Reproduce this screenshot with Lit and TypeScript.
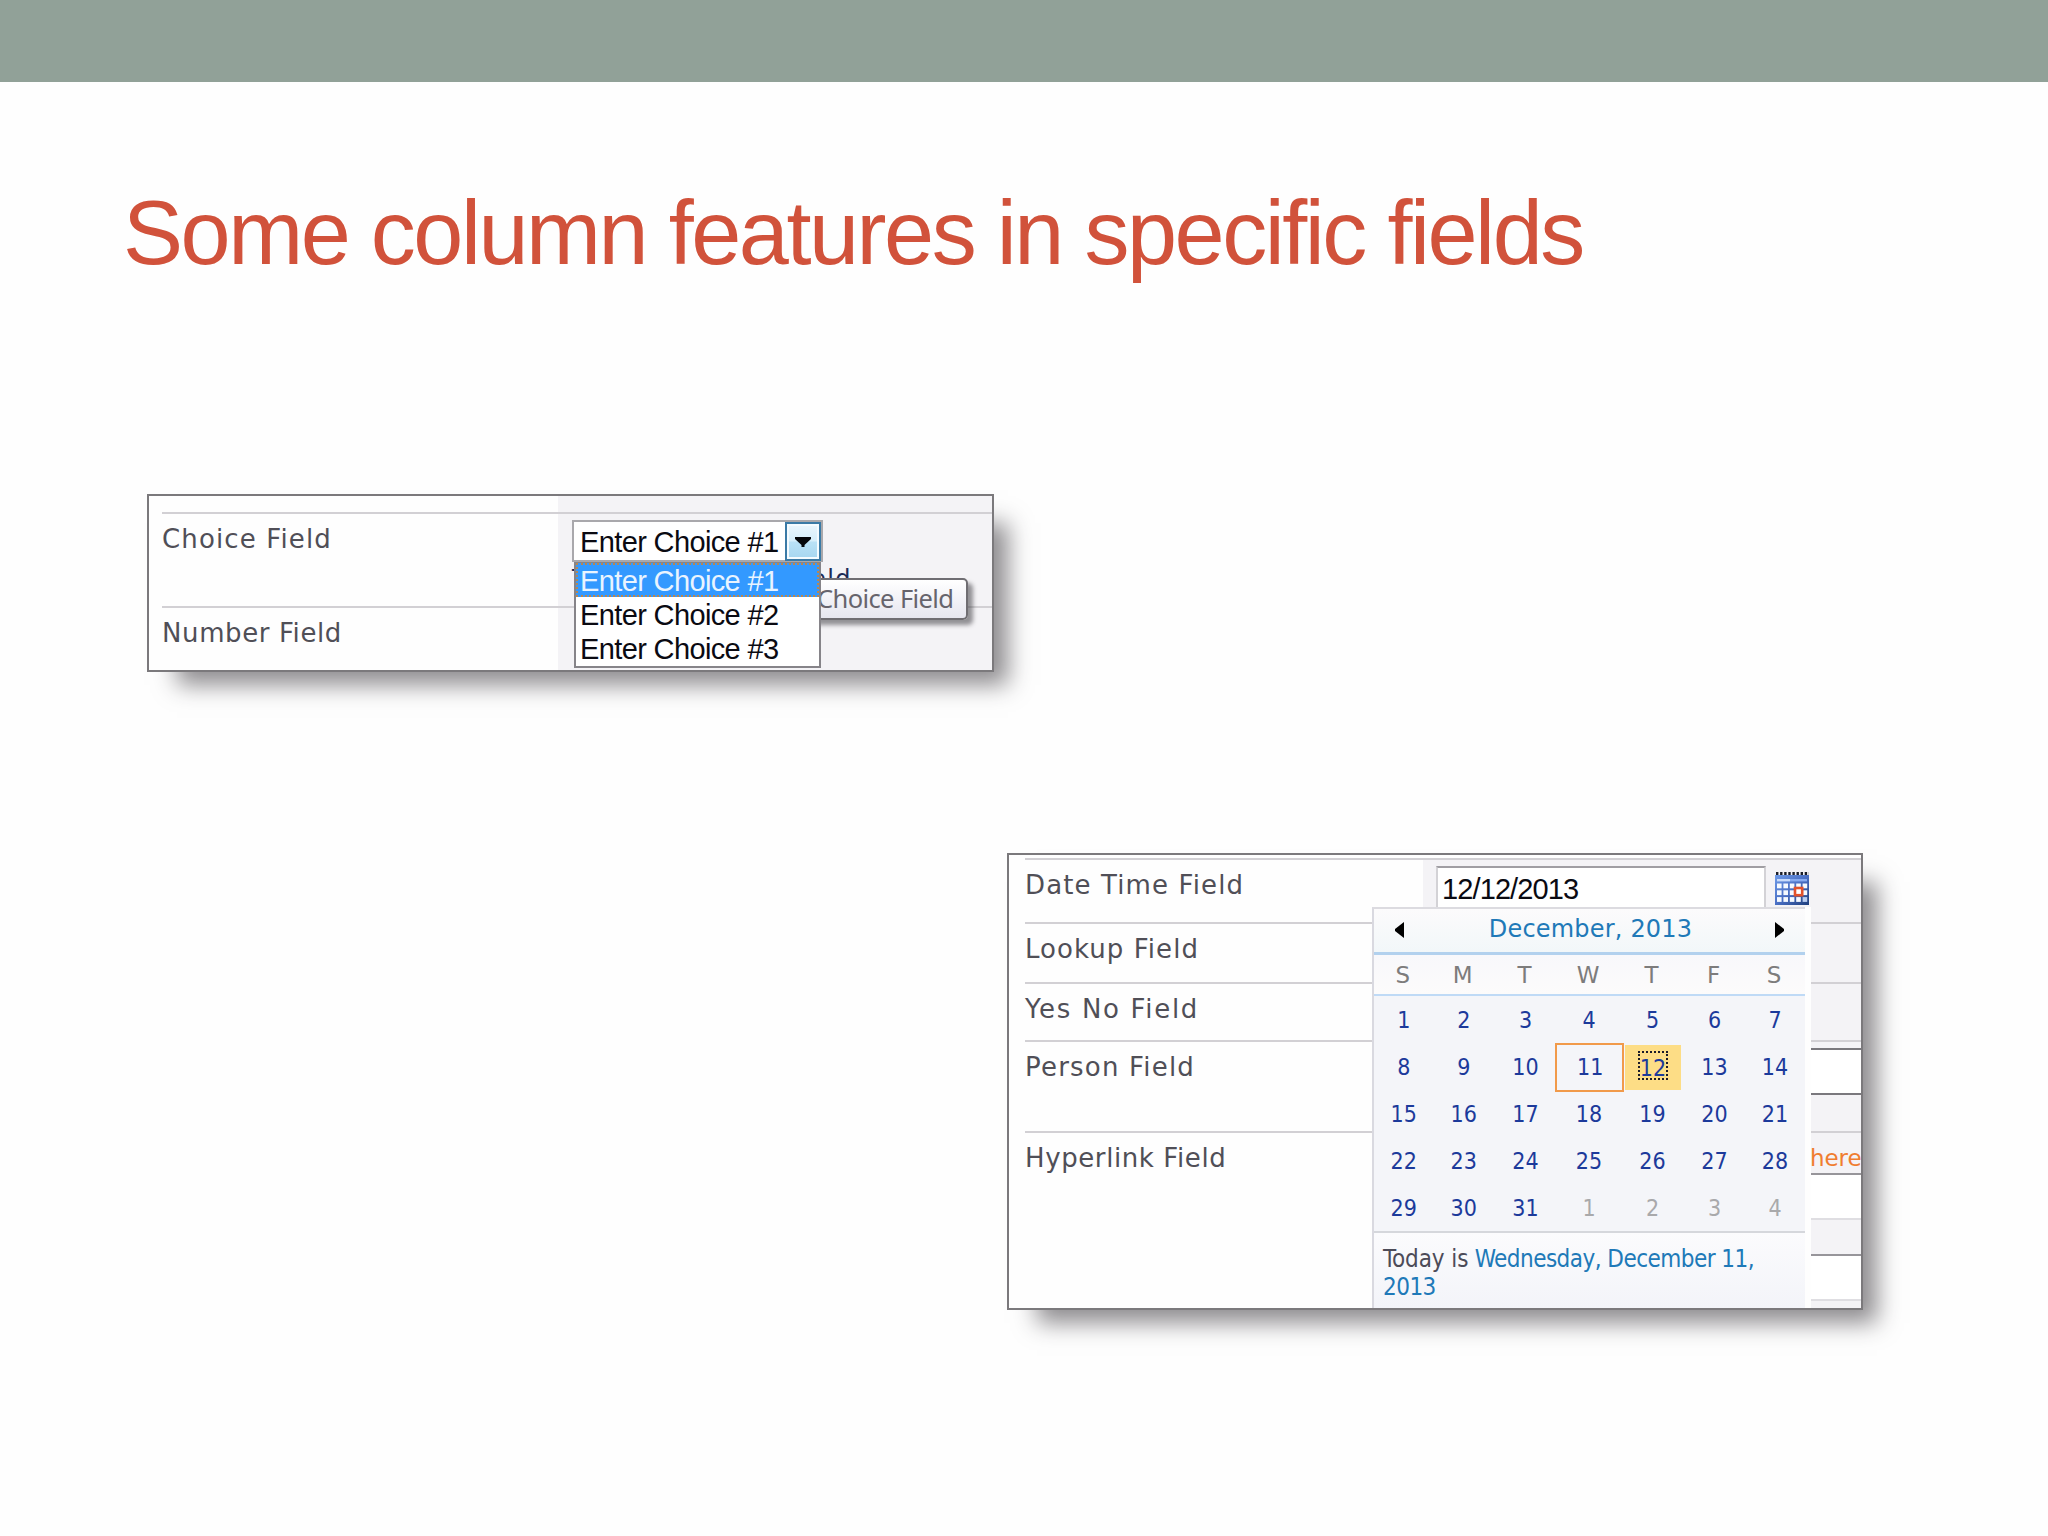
import { LitElement, html, css, svg } from "lit";
import { customElement } from "lit/decorators.js";
import { classMap } from "lit/directives/class-map.js";

interface Label {
  text: string;
  spacing: number;
}

const label = (l: Label) =>
  html`<div class="label" style="letter-spacing:${l.spacing}px">${l.text}</div>`;

const CHOICES = ["Enter Choice #1", "Enter Choice #2", "Enter Choice #3"];
const WEEKDAYS = ["S", "M", "T", "W", "T", "F", "S"];

const rowStyles = css`
  :host {
    display: block;
    box-sizing: border-box;
    position: relative;
    overflow: hidden;
    background: #fefefe;
    border: 2px solid #7b797c;
    box-shadow: 22px 21px 22px -8px rgba(40, 36, 42, 0.52);
    font-family: "DejaVu Sans", Verdana, sans-serif;
  }
  * {
    box-sizing: border-box;
  }
  .row {
    display: flex;
    border-top: 2px solid #d2d0d4;
  }
  .row.lead {
    border-top: 0;
  }
  .label {
    flex: none;
    font-size: 26px;
    line-height: 50px;
    color: #504f57;
    white-space: nowrap;
  }
  .value {
    flex: 1;
    min-width: 0;
    background: #f4f3f6;
  }
`;

@customElement("choice-panel")
export class ChoicePanel extends LitElement {
  static styles = [
    rowStyles,
    css`
      :host {
        width: 847px;
        height: 178px;
      }
      .rows {
        margin-left: 13px;
      }
      .label {
        width: 396px;
      }
      .lead {
        height: 16px;
      }
      .choice {
        height: 94px;
      }
      .number {
        height: 64px;
      }
      .value.pad {
        padding: 6px 0 0 14px;
      }
      .select {
        position: relative;
        z-index: 1;
        display: flex;
        width: 251px;
        height: 42px;
        padding-left: 6px;
        border: 2px solid #a9a8ac;
        background: #fff;
        font: 29px/41px "Liberation Sans", Arial, sans-serif;
        letter-spacing: -0.63px;
        color: #0a0a12;
        white-space: nowrap;
      }
      .current {
        flex: 1;
      }
      .button {
        display: grid;
        place-items: center;
        width: 36px;
        height: 39px;
        border: 2px solid #3a7aa6;
        box-shadow: inset 0 0 0 2px #f4fbff;
        background: linear-gradient(#eaf6fd, #d6eefb 48%, #b9e1f6 52%, #a6d6f0);
      }
      .list {
        position: absolute;
        z-index: 2;
        left: 0;
        top: 40px;
        width: 247px;
        height: 106px;
        border: 2px solid #868489;
        border-top-width: 1px;
        background: #fff;
      }
      .item {
        height: 34px;
        line-height: 36px;
        padding-left: 4px;
      }
      .item.selected {
        color: #e9f4ff;
        background: #3399ff;
        outline: 2px dotted #b98750;
        outline-offset: -2px;
      }
      .tip {
        position: absolute;
        z-index: 1;
        left: 234px;
        top: 56px;
        width: 160px;
        height: 42px;
        padding-left: 7px;
        border: 2px solid #6f6d72;
        border-radius: 5px;
        background: linear-gradient(#fff, #e6e6ef);
        box-shadow: 5px 5px 4px rgba(50, 48, 54, 0.5);
        font: 25.5px/36px "Noto Sans", "Open Sans", sans-serif;
        letter-spacing: -0.6px;
        color: #66646c;
      }
      .hint {
        font-size: 24px;
        line-height: 34px;
        letter-spacing: 1.35px;
        color: #1c2a55;
        white-space: nowrap;
      }
    `,
  ];

  render() {
    return html`
      <div class="rows">
        <div class="row lead"><div class="label"></div><div class="value"></div></div>
        <div class="row choice">
          ${label({ text: "Choice Field", spacing: 1.13 })}
          <div class="value pad">
            <div class="select">
              <span class="current">${CHOICES[0]}</span>
              <span class="button">
                <svg width="16" height="10" viewBox="0 0 16 10">
                  <path d="M0 0H16V2L9.5 8V10H6.5V8L0 2Z" fill="#05070a" />
                </svg>
              </span>
              <div class="tip">Choice Field</div>
              <div class="list">
                ${CHOICES.map(
                  (c, i) =>
                    html`<div class=${classMap({ item: true, selected: i === 0 })}>${c}</div>`
                )}
              </div>
            </div>
            <div class="hint">This is a Choice Field</div>
          </div>
        </div>
        <div class="row number">
          ${label({ text: "Number Field", spacing: 0.6 })}
          <div class="value"></div>
        </div>
      </div>
    `;
  }
}

@customElement("date-popup")
export class DatePopup extends LitElement {
  static styles = css`
    :host {
      display: block;
      background: #fefefe;
      padding-right: 6px;
      font-family: "DejaVu Sans", Verdana, sans-serif;
    }
    * {
      box-sizing: border-box;
    }
    .frame {
      height: 401px;
      border-left: 2px solid #d9d9e0;
      border-top: 2px solid #dcdbe0;
      background: #f4f5f9;
    }
    .head {
      display: flex;
      justify-content: space-between;
      align-items: center;
      height: 46px;
      padding: 0 21px;
      border-bottom: 3px solid #b2d1ee;
      background: linear-gradient(#fcfbfc, #f2f7f9);
      font-size: 24px;
      line-height: 40px;
      letter-spacing: 0.19px;
      color: #2079b8;
    }
    .head svg {
      margin-bottom: 2px;
    }
    .title {
      height: 43px;
      padding-left: 2px;
    }
    .days,
    .week {
      display: grid;
      grid-template-columns: 59.5px 60.5px 63px 64px 63px 61px 60px;
      text-align: center;
    }
    .days {
      height: 41px;
      border-bottom: 2px solid #bfdaf6;
      background: linear-gradient(#f8f8fb, #fcfbfb);
      font-size: 23px;
      line-height: 41px;
      color: #7d7c7c;
    }
    .days span {
      padding-right: 2px;
    }
    .week {
      height: 47px;
      font: 23px/49px "DejaVu Sans Condensed", "DejaVu Sans", Tahoma, sans-serif;
      color: #1c3a9b;
    }
    .day {
      display: flex;
      justify-content: center;
    }
    .day.other {
      color: #a9a9ab;
    }
    .day.today {
      margin: 0 -2.5px 0 -2px;
      border: 2.5px solid #f19a4b;
      line-height: 44px;
      padding-left: 2px;
    }
    .day.picked {
      margin: 2px 3px 2px 4px;
      background: #fddd86;
    }
    .picked .num {
      height: 29px;
      margin-top: 6px;
      line-height: 30px;
      border: 2px dotted #1b1b2a;
    }
    .foot {
      height: 77px;
      padding: 12px 0 0 9px;
      border-top: 2px solid #d5d7dc;
      background: linear-gradient(#fbfbfd, #f3f4f9);
      font: 24px/28px "DejaVu Sans Condensed", "DejaVu Sans", Tahoma, sans-serif;
      letter-spacing: -0.54px;
      color: #2079b8;
      white-space: nowrap;
    }
    .dark {
      color: #4c4b58;
      letter-spacing: -0.1px;
    }
  `;

  private cell(i: number) {
    const n = i < 31 ? i + 1 : i - 30;
    return html`<span
      class=${classMap({ day: true, other: i >= 31, today: i === 10, picked: i === 11 })}
      ><span class="num">${n}</span></span
    >`;
  }

  render() {
    return html`
      <div class="frame">
        <div class="head">
          <svg width="9" height="16" viewBox="0 0 9 16"><path d="M9 0V16L0 9V7Z" /></svg>
          <span class="title">December, 2013</span>
          <svg width="9" height="16" viewBox="0 0 9 16"><path d="M0 0V16L9 9V7Z" /></svg>
        </div>
        <div class="days">${WEEKDAYS.map((d) => html`<span>${d}</span>`)}</div>
        ${[0, 1, 2, 3, 4].map(
          (w) =>
            html`<div class="week">${[0, 1, 2, 3, 4, 5, 6].map((d) => this.cell(w * 7 + d))}</div>`
        )}
        <div class="foot">
          <span class="dark">Today is</span> Wednesday, December 11,<br />2013
        </div>
      </div>
    `;
  }
}

@customElement("date-panel")
export class DatePanel extends LitElement {
  static styles = [
    rowStyles,
    css`
      :host {
        width: 856px;
        height: 457px;
      }
      .rows {
        margin-left: 16px;
      }
      .label {
        width: 398px;
      }
      .lead {
        height: 3px;
      }
      .date {
        height: 64px;
      }
      .lookup {
        height: 60px;
      }
      .yesno {
        height: 58px;
      }
      .person {
        height: 91px;
      }
      .link {
        height: 177px;
      }
      .entry {
        display: flex;
        gap: 8px;
        padding: 6px 0 0 13px;
      }
      .input {
        width: 330px;
        height: 50px;
        padding-left: 4px;
        border: 2px solid #d3d2d6;
        border-top-color: #a09ea3;
        background: #fff;
        font: 29px/43px "Liberation Sans", Arial, sans-serif;
        letter-spacing: -0.89px;
        color: #0a0a12;
      }
      .icon {
        margin-top: 6px;
      }
      .box {
        height: 47px;
        background: #fff;
        border-top: 2px solid #97959a;
        border-bottom: 2px solid #dfdee2;
      }
      .person .box {
        margin-top: 6px;
        border-color: #7a787d;
      }
      .here {
        height: 40px;
        padding-left: 387px;
        font-size: 23px;
        line-height: 51px;
        letter-spacing: -0.1px;
        color: #f07d30;
        white-space: nowrap;
      }
      .gap {
        margin-top: 34px;
      }
      date-popup {
        position: absolute;
        left: 363px;
        top: 52px;
        width: 439px;
      }
    `,
  ];

  private icon() {
    const xs = [0, 1, 2, 3, 4];
    const ys = [0, 1, 2];
    return html`<svg class="icon" width="36" height="33" viewBox="0 0 36 33">
      <defs>
        <linearGradient id="g" x1="0" y1="0" x2="1" y2="1">
          <stop offset="0" stop-color="#6f9be8" />
          <stop offset="0.5" stop-color="#4a6fc4" />
          <stop offset="1" stop-color="#1f3f7c" />
        </linearGradient>
      </defs>
      <rect x="1" y="3" width="34" height="30" fill="url(#g)" />
      <path d="M2 1.5H35" stroke="#1a1d28" stroke-width="3" stroke-dasharray="2.4 1.7" />
      <rect x="3" y="7" width="13" height="2.4" fill="#c9dcfb" />
      <rect x="16" y="7" width="17" height="2.4" fill="#86aaf0" />
      ${ys.map((y) =>
        xs.map(
          (x) =>
            svg`<rect x=${3 + x * 6.4} y=${11.5 + y * 6.8} width="4.6" height="4.8" fill=${
              x + y > 5 ? "#b9cdf0" : "#f6faff"
            } />`
        )
      )}
      <rect x="21" y="16" width="7.2" height="7.2" fill="#fff" stroke="#e2522b" stroke-width="2.6" />
    </svg>`;
  }

  render() {
    return html`
      <div class="rows">
        <div class="row lead"></div>
        <div class="row date">
          ${label({ text: "Date Time Field", spacing: 1.12 })}
          <div class="value entry">
            <div class="input">12/12/2013</div>
            ${this.icon()}
          </div>
        </div>
        <div class="row lookup">
          ${label({ text: "Lookup Field", spacing: 1.05 })}
          <div class="value"></div>
        </div>
        <div class="row yesno">
          ${label({ text: "Yes No Field", spacing: 1.68 })}
          <div class="value"></div>
        </div>
        <div class="row person">
          ${label({ text: "Person Field", spacing: 1.2 })}
          <div class="value"><div class="box"></div></div>
        </div>
        <div class="row link">
          ${label({ text: "Hyperlink Field", spacing: 0.6 })}
          <div class="value">
            <div class="here">here</div>
            <div class="box"></div>
            <div class="box gap"></div>
          </div>
        </div>
      </div>
      <date-popup></date-popup>
    `;
  }
}

@customElement("app-root")
export class AppRoot extends LitElement {
  static styles = css`
    :host {
      display: flex;
      flex-direction: column;
      align-items: flex-start;
      width: 2048px;
      height: 1536px;
      overflow: hidden;
      background: #fefefe;
    }
    .bar {
      width: 100%;
      height: 82px;
      background: #91a198;
    }
    .title {
      margin: 101px 0 0 123px;
      font: 400 90px/100px "Liberation Sans", Arial, sans-serif;
      letter-spacing: -2.46px;
      color: #d1523b;
      white-space: nowrap;
    }
    choice-panel {
      margin: 211px 0 0 147px;
    }
    date-panel {
      margin: 181px 0 0 1007px;
    }
  `;

  render() {
    return html`
      <div class="bar"></div>
      <h1 class="title">Some column features in specific fields</h1>
      <choice-panel></choice-panel>
      <date-panel></date-panel>
    `;
  }
}
